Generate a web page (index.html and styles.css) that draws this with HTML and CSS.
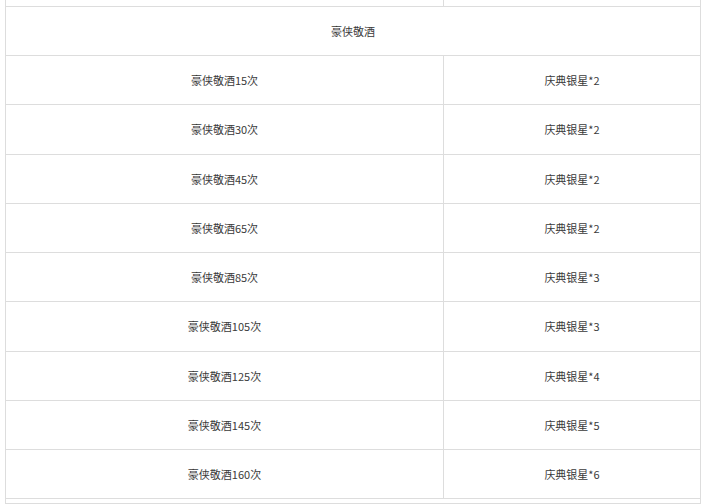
FILE: index.html
```html
<!DOCTYPE html>
<html lang="zh">
<head>
<meta charset="utf-8">
<link rel="stylesheet" href="styles.css">
</head>
<body>
<div class="wrap">
<table class="tbl">
  <colgroup><col class="col1"><col class="col2"></colgroup>
  <tr class="partial"><td></td><td></td></tr>
  <tr class="head"><td colspan="2">豪侠敬酒</td></tr>
  <tr><td>豪侠敬酒15次</td><td>庆典银星*2</td></tr>
  <tr><td>豪侠敬酒30次</td><td>庆典银星*2</td></tr>
  <tr><td>豪侠敬酒45次</td><td>庆典银星*2</td></tr>
  <tr><td>豪侠敬酒65次</td><td>庆典银星*2</td></tr>
  <tr><td>豪侠敬酒85次</td><td>庆典银星*3</td></tr>
  <tr><td>豪侠敬酒105次</td><td>庆典银星*3</td></tr>
  <tr><td>豪侠敬酒125次</td><td>庆典银星*4</td></tr>
  <tr><td>豪侠敬酒145次</td><td>庆典银星*5</td></tr>
  <tr><td>豪侠敬酒160次</td><td>庆典银星*6</td></tr>
  <tr class="tail"><td colspan="2"></td></tr>
</table>
</div>
</body>
</html>
```
FILE: styles.css
```css
html, body {
  margin: 0;
  padding: 0;
  background: #fff;
  overflow: hidden;
  height: 504px;
}
.wrap {
  padding-left: 5px;
  width: 695px;
}
.tbl {
  border-collapse: collapse;
  width: 695px;
  table-layout: fixed;
  font-family: "Microsoft YaHei", "Noto Sans CJK SC", "Noto Sans", sans-serif;
  font-size: 11px;
  color: #3a3a3a;
}
.col1 { width: 438px; }
.col2 { width: 257px; }
.tbl td {
  border: 1px solid #ddd;
  text-align: center;
  vertical-align: middle;
  height: 48.25px;
  padding: 0;
  line-height: 16px;
}
.tbl .head td {
  height: 48px;
}
.tbl .partial td {
  height: 6px;
  border-top: none;
}
.tbl .tail td {
  height: 4px;
}
```
